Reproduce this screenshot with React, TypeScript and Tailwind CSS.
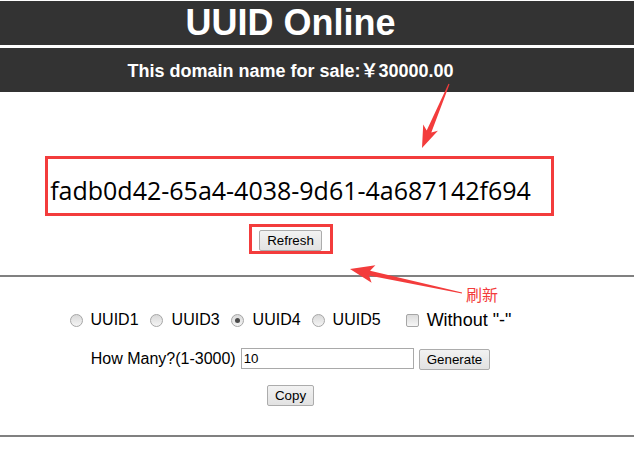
import React from "react";

const RED = "#f33c3c";

type Pt = [number, number];

// annotation arrow: thin tail, thicker shaft, wide head
const arrowPoints = (tail: Pt, tip: Pt, headLen: number, headHalf: number, shaft: number, tailW: number) => {
    const dx = tip[0] - tail[0];
    const dy = tip[1] - tail[1];
    const len = Math.sqrt(dx * dx + dy * dy);
    const ux = dx / len;
    const uy = dy / len;
    const nx = -uy;
    const ny = ux;
    const bx = tip[0] - ux * headLen;
    const by = tip[1] - uy * headLen;
    const wx = tip[0] - ux * (headLen + 4);
    const wy = tip[1] - uy * (headLen + 4);
    const pts: Pt[] = [
        [tail[0] + nx * tailW / 2, tail[1] + ny * tailW / 2],
        [bx + nx * shaft / 2, by + ny * shaft / 2],
        [wx + nx * headHalf, wy + ny * headHalf],
        tip,
        [wx - nx * headHalf, wy - ny * headHalf],
        [bx - nx * shaft / 2, by - ny * shaft / 2],
        [tail[0] - nx * tailW / 2, tail[1] - ny * tailW / 2],
    ];
    return pts.map((p) => `${p[0].toFixed(1)},${p[1].toFixed(1)}`).join(" ");
};

const Radio = ({ checked }: { checked?: boolean }) => (
    <span className="w-[13px] h-[13px] rounded-full border border-[#a6a6a6] bg-gradient-to-b from-[#d9d9d9] to-[#f4f4f4] flex items-center justify-center">
        {checked && <span className="w-[5px] h-[5px] rounded-full bg-[#4a4a4a]" />}
    </span>
);

const Btn = ({ label }: { label: string }) => (
    <button className="h-[21px] px-[7px] border border-[#acacac] rounded-[2px] bg-gradient-to-b from-[#f2f2f2] to-[#e2e2e2] text-[13.33px] leading-[15px] text-black font-['Liberation_Sans',Arial,sans-serif]">
        {label}
    </button>
);

export default function App() {
    const uuid = "fadb0d42-65a4-4038-9d61-4a687142f694";

    return (
        <div className="relative w-[634px] h-[456px] bg-white overflow-hidden font-['Liberation_Sans',Arial,sans-serif] text-black">
            <div className="h-px" />
            <div className="h-[44px] bg-[#333333] flex items-center">
                <div className="w-[581px] text-center text-white font-bold text-[36px] leading-none">UUID Online</div>
            </div>
            <div className="h-[44px] mt-[3px] bg-[#333333] flex items-center">
                <div className="w-[581px] text-center text-white font-bold text-[18px] leading-none">
                    This domain name for sale:<span className="font-['Noto_Sans_CJK_SC',sans-serif]">￥</span>30000.00
                </div>
            </div>

            <div className="w-[581px] pt-[81px] flex flex-col items-center">
                <div className="font-['Open_Sans',sans-serif] text-[25px] leading-[34px] whitespace-nowrap">{uuid}</div>
                <div className="mt-[21px]">
                    <Btn label="Refresh" />
                </div>
            </div>

            <div className="mt-[23px] h-[2px] bg-[#808080]" />

            <div className="w-[581px] mt-[33px] h-[20px] flex items-center justify-center text-[16px]">
                <Radio />
                <span className="ml-[8px]">UUID1</span>
                <span className="ml-[11px]"><Radio /></span>
                <span className="ml-[9px]">UUID3</span>
                <span className="ml-[11px]"><Radio checked /></span>
                <span className="ml-[9px]">UUID4</span>
                <span className="ml-[11px]"><Radio /></span>
                <span className="ml-[8px]">UUID5</span>
                <span className="ml-[25px] w-[13px] h-[13px] rounded-[2px] border border-[#a6a6a6] bg-gradient-to-b from-[#dcdcdc] to-[#f6f6f6]" />
                <span className="ml-[8px] text-[18px]">Without "-"</span>
            </div>

            <div className="w-[581px] mt-[18px] h-[21px] flex items-center justify-center">
                <span className="text-[16px]">How Many?(1-3000)</span>
                <div className="ml-[5px] w-[173px] h-[21px] border border-[#a9a9a9] flex items-center pl-[2px] text-[13.33px]">10</div>
                <div className="ml-[5px]">
                    <Btn label="Generate" />
                </div>
            </div>

            <div className="w-[581px] mt-[16px] flex justify-center">
                <Btn label="Copy" />
            </div>

            <div className="mt-[29px] h-[2px] bg-[#808080]" />

            <svg className="absolute left-0 top-0 pointer-events-none" width="634" height="456">
                <rect x="46.5" y="157.5" width="506" height="57" fill="none" stroke={RED} strokeWidth="3" />
                <rect x="250.5" y="225.5" width="81" height="27" fill="none" stroke={RED} strokeWidth="3" />
                <polygon points={arrowPoints([449, 84], [422, 148], 18, 8, 5, 1)} fill={RED} />
                <polygon points={arrowPoints([462, 293], [350, 269], 20, 9, 5, 1)} fill={RED} />
            </svg>
            <span className="absolute left-[466px] top-[284px] text-[16px] leading-[20px] text-[#f33c3c] font-['Noto_Sans_CJK_SC',sans-serif]">刷新</span>
        </div>
    );
}
